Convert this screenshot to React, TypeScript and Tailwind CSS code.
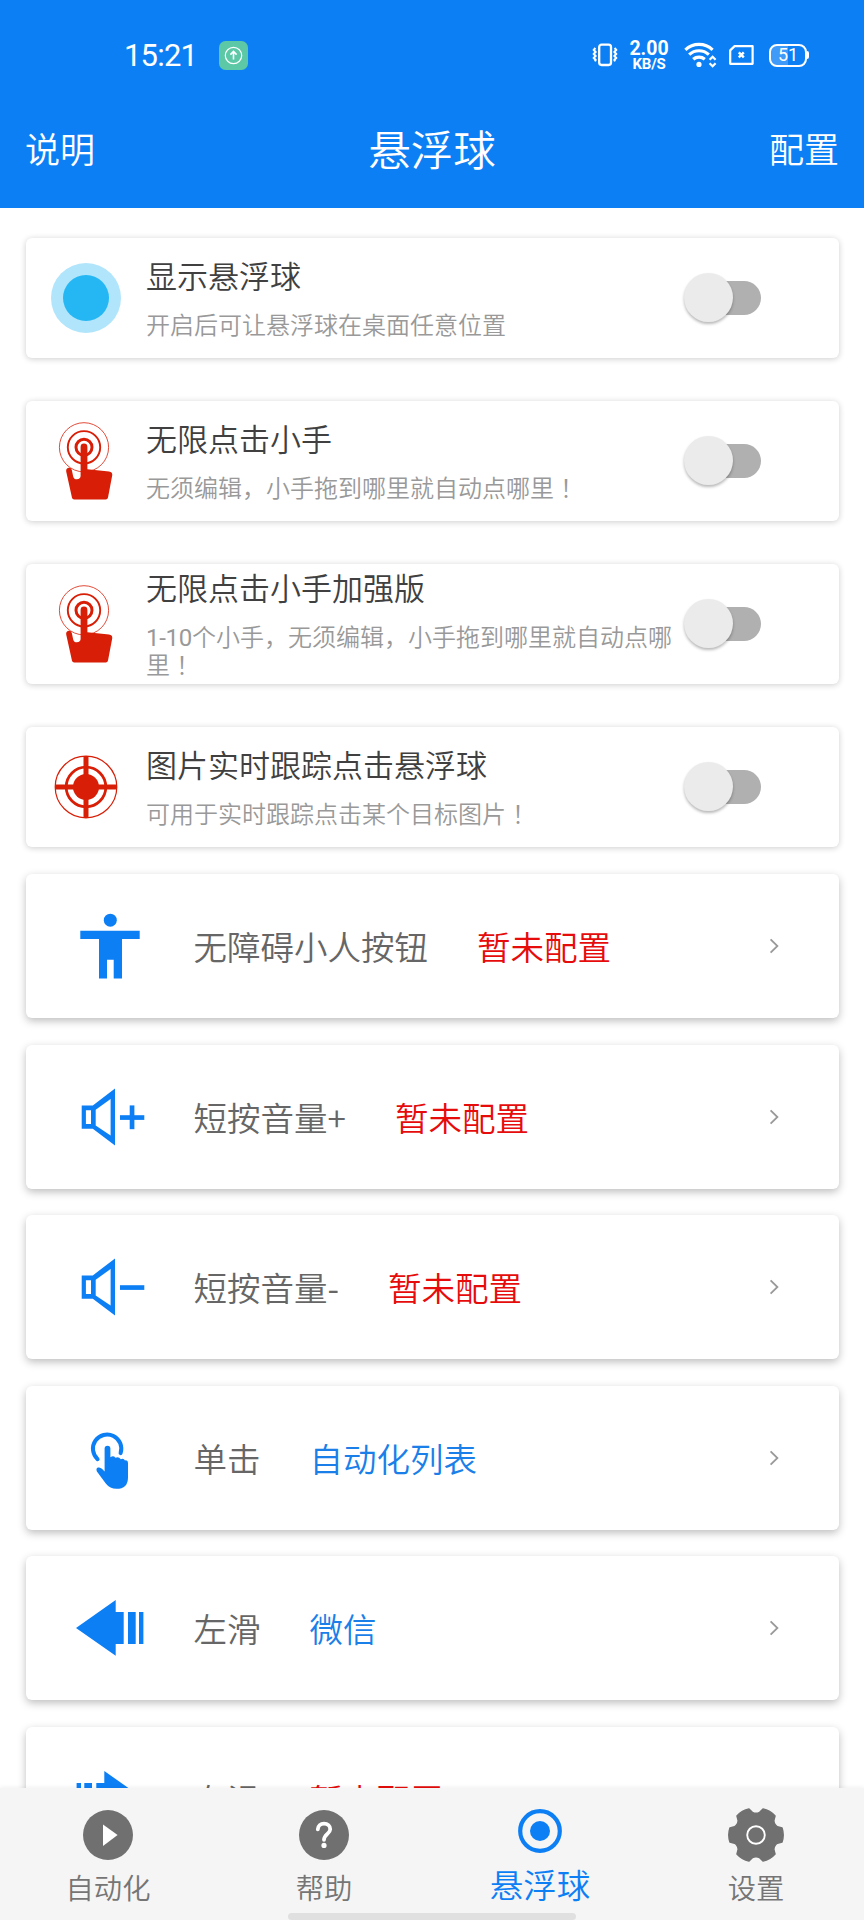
import { Fragment, useState } from "react";
import type { ReactNode } from "react";

const CJK = "font-['Noto_Sans_CJK_SC',sans-serif]";

function StatusBar() {
  return (
    <div className="flex h-[110px] items-center pl-[124px] font-normal text-white">
      <span className="w-[74px] pt-[1px] font-['Roboto',sans-serif] text-[31px] leading-[36px] tracking-[-0.8px] whitespace-nowrap">
        15:21
      </span>
      <svg className="ml-[21px]" width="29" height="29" viewBox="0 0 29 29" fill="none">
        <rect width="29" height="29" rx="6.5" fill="#5cc8a6" />
        <circle cx="14.5" cy="14.5" r="8.2" stroke="#fff" strokeWidth="1.2" />
        <path d="M14.5 18.6V11M11.4 13.6l3.1-3.1 3.1 3.1" stroke="#fff" strokeWidth="1.6" />
      </svg>
      {/* vibrate */}
      <svg className="ml-[344px]" width="26" height="24" viewBox="0 0 26 24" fill="none" stroke="#fff">
        <rect x="7.2" y="1.6" width="11.8" height="20.4" rx="2.4" strokeWidth="2.3" />
        <path
          d="M3.4 5l-1.6 1.9 1.8 2-1.8 2 1.8 2-1.8 2 1.8 2-.6 1.4M22.6 5l1.6 1.9-1.8 2 1.8 2-1.8 2 1.8 2-1.8 2 .6 1.4"
          strokeWidth="2.1"
        />
      </svg>
      <div className="ml-[11px] flex w-[40px] flex-col items-center pt-[1px] font-['Roboto',sans-serif] font-bold">
        <span className="text-[19.5px] leading-[15px]">2.00</span>
        <span className="mt-[1px] text-[15px] leading-[14px] tracking-[-0.2px]">KB/S</span>
      </div>
      {/* wifi */}
      <svg className="ml-[15px]" width="33" height="26" viewBox="0 0 33 26" fill="none" stroke="#fff">
        <path d="M1.4 7.8a20 20 0 0 1 27.2 0" strokeWidth="3.2" />
        <path d="M5.2 12.6a14.4 14.4 0 0 1 19.6 0" strokeWidth="3.2" />
        <path d="M9.2 17.2a9 9 0 0 1 11.6 0" strokeWidth="3.2" />
        <circle cx="15" cy="22.4" r="2.6" fill="#fff" stroke="none" />
        <path d="M25.6 17.8l3-3 3 3M25.6 21.2l3 3 3-3" strokeWidth="2.2" />
      </svg>
      {/* sim */}
      <svg className="ml-[12px]" width="25" height="20" viewBox="0 0 25 20" fill="none" stroke="#fff">
        <path d="M5.6 1.1H23.6V18.8H1.2V5.4Z" strokeWidth="2.2" strokeLinejoin="round" />
        <path d="M9.8 7.4l5 5M14.8 7.4l-5 5" strokeWidth="2.4" />
      </svg>
      <div className="ml-[15px] flex items-center">
        <span className="flex h-[23px] w-[38px] items-center justify-center rounded-[8px] border-2 border-white bg-[linear-gradient(90deg,#3f9af8_50%,transparent_50%)] font-['Roboto',sans-serif] text-[18px] leading-none">
          51
        </span>
        <span className="h-[8px] w-[2px] rounded-r-full bg-white" />
      </div>
    </div>
  );
}

function BallIcon() {
  return (
    <svg width="70" height="70" viewBox="0 0 70 70">
      <circle cx="35" cy="35" r="35" fill="#b1e5fb" />
      <circle cx="35" cy="35" r="23" fill="#25b7f3" />
    </svg>
  );
}

function TapIcon() {
  return (
    <svg width="70" height="90" viewBox="0 0 70 90" fill="none" stroke="#d81e06">
      <circle cx="33" cy="31.3" r="24.6" strokeWidth="0.8" />
      <circle cx="33" cy="31.3" r="16.2" strokeWidth="1.9" />
      <circle cx="33" cy="31.3" r="8" strokeWidth="3" />
      <path
        d="M29.6 31a3.4 3.4 0 0 1 6.8 0V53.2L58 55.6Q61.8 56.2 61.2 59.5L57 81.5Q56.6 83.6 54.8 83.6H23.2Q21.4 83.6 21 81.8L15.2 55.5Q14.8 52.4 17.6 51.8Q20.2 51.4 20.8 54L22.2 60.4Q23 63.3 25.8 63.3Q29.6 63 29.6 60Z"
        fill="#d81e06"
        stroke="none"
      />
    </svg>
  );
}

function TargetIcon() {
  return (
    <svg width="64" height="64" viewBox="0 0 64 64" fill="none" stroke="#d81e06">
      <circle cx="32" cy="32" r="30.8" strokeWidth="1.2" />
      <circle cx="32" cy="32" r="19.8" strokeWidth="2.8" />
      <circle cx="32" cy="32" r="13" fill="#d81e06" stroke="none" />
      <path d="M32 1V63M1 32H63" strokeWidth="5" />
    </svg>
  );
}

function PersonIcon() {
  return (
    <svg width="72" height="72" viewBox="0 0 72 72" fill="#0d7ff5">
      <circle cx="36.3" cy="10.2" r="6.5" />
      <path d="M6.3 20.8H65.7V29.1H48V68.4H39.7V49.8H33V68.4H25V29.1H6.3Z" />
    </svg>
  );
}

function VolumeIcon({ plus }: { plus?: boolean }) {
  return (
    <svg width="72" height="72" viewBox="0 0 72 72" fill="#0d7ff5">
      <path
        fillRule="evenodd"
        d="M7.7 24.4H18.8L41 7.4V64.6L18.8 47.8H7.7ZM11.9 29.2V43H17V29.2ZM21.7 28.8V44.4L36.6 54.4V18Z"
      />
      <path d="M46 34.2H70.3V38.9H46Z" />
      {plus && <path d="M55.7 24.4H60.4V48.2H55.7Z" />}
    </svg>
  );
}

function ClickIcon() {
  return (
    <svg width="72" height="72" viewBox="0 0 72 72" fill="none">
      <path d="M23.6 37.2A14.2 14.2 0 1 1 46.6 31.2" stroke="#0d7ff5" strokeWidth="4" strokeLinecap="round" />
      <path
        d="M30.6 26.6a2.9 2.9 0 0 1 5.8 0V35.2Q39.6 33.2 41.4 35.8Q44.6 34 46.8 37.2Q49.6 35.8 51 38.4Q54 38 54 41.4V55.4Q54 66.8 42.4 66.8Q36 66.8 31.8 61.4L22.9 49.4Q21.6 46.6 24 45.6Q26.2 45 28.2 47L30.6 49.6Z"
        fill="#0d7ff5"
      />
    </svg>
  );
}

function SwipeIcon({ flip }: { flip?: boolean }) {
  return (
    <svg className={flip ? "-scale-x-100" : ""} width="72" height="72" viewBox="0 0 72 72" fill="#0d7ff5">
      <path d="M2 36L41.7 8V20H49.7V52H41.7V63.8Z" />
      <path d="M54 20H61.7V52H54ZM65 20H69.4V52H65Z" />
    </svg>
  );
}

function gearPath() {
  const pt = (deg: number, r: number) => {
    const a = (deg * Math.PI) / 180;
    return `${(28 + r * Math.cos(a)).toFixed(2)} ${(28 + r * Math.sin(a)).toFixed(2)}`;
  };
  let d = `M${pt(-15, 27)}`;
  for (let i = 0; i < 6; i++) {
    const t = i * 60;
    d += `Q${pt(t, 28.4)} ${pt(t + 15, 27)}L${pt(t + 21, 23)}Q${pt(t + 30, 20.8)} ${pt(t + 39, 23)}L${pt(t + 45, 27)}`;
  }
  return d + "Z";
}

function Switch() {
  const [on, setOn] = useState(false);
  return (
    <button
      type="button"
      role="switch"
      aria-checked={on}
      onClick={() => setOn(!on)}
      className={`relative h-[34px] w-[70px] rounded-full ${on ? "bg-[#86bffa]" : "bg-[#b0b0b0]"}`}
    >
      <span
        className={`absolute top-[-8px] size-[49px] rounded-full shadow-[0_2px_3px_rgba(0,0,0,0.28)] ${
          on ? "right-[-7px] bg-[#0d7ff5]" : "left-[-7px] bg-[#ebebeb]"
        }`}
      />
    </button>
  );
}

// digits go in Roboto, the full-width exclamation mark is centred in its cell
function Desc({ text }: { text: string }) {
  return (
    <p className="mt-[17px] text-[24px] leading-[28px] text-[#999]">
      {text.split(/(1-10|！)/).map((part, i) => {
        if (part === "1-10") return <span key={i} className="font-['Roboto',sans-serif] leading-none font-normal tracking-[-0.3px]">{part}</span>;
        if (part === "！") return <span key={i} className="font-['Noto_Sans_CJK_TC',sans-serif] leading-none" lang="zh-TW">{part}</span>;
        return <Fragment key={i}>{part}</Fragment>;
      })}
    </p>
  );
}

const toggles: { icon: ReactNode; title: string; desc: string }[] = [
  { icon: <BallIcon />, title: "显示悬浮球", desc: "开启后可让悬浮球在桌面任意位置" },
  { icon: <TapIcon />, title: "无限点击小手", desc: "无须编辑，小手拖到哪里就自动点哪里！" },
  { icon: <TapIcon />, title: "无限点击小手加强版", desc: "1-10个小手，无须编辑，小手拖到哪里就自动点哪里！" },
  { icon: <TargetIcon />, title: "图片实时跟踪点击悬浮球", desc: "可用于实时跟踪点击某个目标图片！" },
];

const actions: { icon: ReactNode; label: string; value: string; set?: boolean }[] = [
  { icon: <PersonIcon />, label: "无障碍小人按钮", value: "暂未配置" },
  { icon: <VolumeIcon plus />, label: "短按音量+", value: "暂未配置" },
  { icon: <VolumeIcon />, label: "短按音量-", value: "暂未配置" },
  { icon: <ClickIcon />, label: "单击", value: "自动化列表", set: true },
  { icon: <SwipeIcon />, label: "左滑", value: "微信", set: true },
  { icon: <SwipeIcon flip />, label: "右滑", value: "暂未配置" },
];

function NavItem({ icon, label, active }: { icon: ReactNode; label: string; active?: boolean }) {
  return (
    <a className="flex flex-1 flex-col items-center">
      <span className={`flex items-center justify-center ${active ? "h-[85px]" : "h-[94px]"}`}>{icon}</span>
      <span
        className={
          active
            ? "mt-[-6px] text-[33.5px] leading-[34px] text-[#0d7ff5]"
            : "mt-[-9px] text-[28.3px] leading-[28px] text-[#757575]"
        }
      >
        {label}
      </span>
    </a>
  );
}

export default function App() {
  return (
    <div className={`flex h-[1920px] w-[864px] flex-col overflow-hidden bg-white font-[350] ${CJK}`} lang="zh-CN">
      <header className="h-[208px] shrink-0 bg-[#0d7ff5] text-white">
        <StatusBar />
        <div className="flex h-[75px] items-center justify-between pr-[25px] pl-[25px] text-[35px] leading-[40px]">
          <span>说明</span>
          <h1 className="text-[42.5px] leading-[48px]">悬浮球</h1>
          <span>配置</span>
        </div>
      </header>

      <main className="min-h-0 flex-1 overflow-hidden px-[25.5px] pt-[29.5px]">
        <div className="flex flex-col gap-[43px]">
          {toggles.map((t) => (
            <section
              key={t.title}
              className="flex h-[120px] items-center rounded-[6px] bg-white shadow-[0_1px_6px_rgba(0,0,0,0.2)]"
            >
              <div className="flex w-[120px] shrink-0 justify-center">{t.icon}</div>
              <div className="w-[531px] pl-[0.5px]">
                <h2 className="text-[31px] leading-[36px] text-[#404040]">{t.title}</h2>
                <Desc text={t.desc} />
              </div>
              <div className="ml-[14.5px] flex items-center">
                <Switch />
              </div>
            </section>
          ))}
        </div>

        <div className="mt-[27.5px] flex flex-col gap-[26.5px]">
          {actions.map((a) => (
            <section
              key={a.label}
              className="flex h-[144px] items-center rounded-[6px] bg-white text-[33.5px] leading-[40px] shadow-[0_3px_8px_rgba(0,0,0,0.26)]"
            >
              <div className="flex w-[168px] shrink-0 justify-center">{a.icon}</div>
              <span className="text-[#666]">{a.label}</span>
              <span className={`ml-[49px] ${a.set ? "text-[#1a7fe8]" : "text-[#e60c0c]"}`}>{a.value}</span>
              <svg className="mr-[60px] ml-auto" width="10" height="16" viewBox="0 0 10 16" fill="none">
                <path d="M1.6 1.4L8.4 8L1.6 14.6" stroke="#999" strokeWidth="1.8" />
              </svg>
            </section>
          ))}
        </div>
      </main>

      <nav className="relative flex h-[132px] shrink-0 bg-[#f5f5f5] shadow-[0_-1px_4px_rgba(0,0,0,0.06)]">
        <NavItem
          label="自动化"
          icon={
            <svg width="50" height="50" viewBox="0 0 50 50">
              <circle cx="25" cy="25" r="25" fill="#707070" />
              <path d="M20 14.4L34.6 25L20 36Z" fill="#fff" />
            </svg>
          }
        />
        <NavItem
          label="帮助"
          icon={
            <svg width="50" height="50" viewBox="0 0 50 50" fill="none">
              <circle cx="25" cy="25" r="25" fill="#707070" />
              <path
                d="M18.8 19.4C19 15.6 21.6 13.6 25 13.6C28.6 13.6 31.2 15.8 31.2 19.2C31.2 23.6 25 24.2 25 29.8"
                stroke="#fff"
                strokeWidth="3.8"
                strokeLinecap="round"
              />
              <circle cx="25" cy="35.4" r="2.6" fill="#fff" />
            </svg>
          }
        />
        <NavItem
          active
          label="悬浮球"
          icon={
            <svg width="44" height="44" viewBox="0 0 44 44" fill="none">
              <circle cx="22" cy="22" r="19.8" stroke="#0d7ff5" strokeWidth="4.2" />
              <circle cx="22" cy="22" r="10" fill="#0d7ff5" />
            </svg>
          }
        />
        <NavItem
          label="设置"
          icon={
            <svg width="56" height="56" viewBox="0 0 56 56">
              <path d={gearPath()} fill="#707070" stroke="#707070" strokeWidth="1.4" strokeLinejoin="round" />
              <circle cx="28" cy="28" r="8.8" fill="none" stroke="#fff" strokeWidth="1.9" />
            </svg>
          }
        />
        <div className="absolute bottom-0 left-[288px] h-[7px] w-[288px] rounded-full bg-[#e0e0e0]" />
      </nav>
    </div>
  );
}
